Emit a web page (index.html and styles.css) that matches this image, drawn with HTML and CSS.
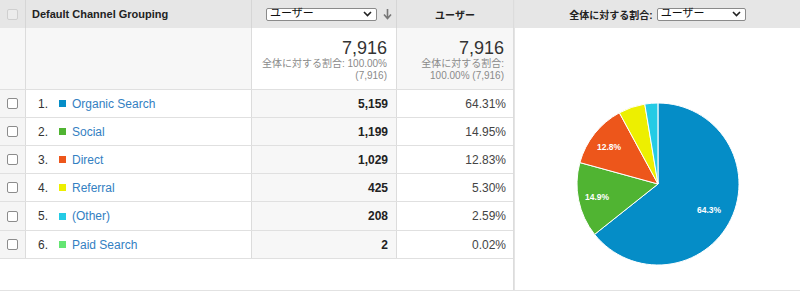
FILE: index.html
```html
<!DOCTYPE html>
<html lang="ja">
<head>
<meta charset="utf-8">
<title>Default Channel Grouping</title>
<link rel="stylesheet" href="styles.css">
</head>
<body>
<div class="report">
  <div class="table">
    <div class="row head">
      <div class="cell c-check"><span class="box disabled"></span></div>
      <div class="cell c-dim"><span class="head-label">Default Channel Grouping</span></div>
      <div class="cell c-metric head-metric">
        <span class="select"><span class="select-text">ユーザー</span><svg class="chev" width="9" height="6" viewBox="0 0 9 6"><path d="M1 1 L4.5 4.5 L8 1" fill="none" stroke="#222" stroke-width="1.6"/></svg></span>
        <svg class="sort" width="9" height="11" viewBox="0 0 9 11"><path d="M4.5 0 V9 M1 5.5 L4.5 9.5 L8 5.5" fill="none" stroke="#777" stroke-width="1.6"/></svg>
      </div>
      <div class="cell c-pct head-pct"><span class="head-label jp">ユーザー</span></div>
    </div>
    <div class="row summary">
      <div class="cell c-check"></div>
      <div class="cell c-dim"></div>
      <div class="cell c-metric sum-cell">
        <span class="big">7,916</span>
        <span class="sub">全体に対する割合: 100.00%</span>
        <span class="sub">(7,916)</span>
      </div>
      <div class="cell c-pct sum-cell">
        <span class="big">7,916</span>
        <span class="sub">全体に対する割合:</span>
        <span class="sub">100.00% (7,916)</span>
      </div>
    </div>
    <div class="row data">
      <div class="cell c-check"><span class="box"></span></div>
      <div class="cell c-dim"><span class="num">1.</span><span class="sw sw-blue"></span><a class="link">Organic Search</a></div>
      <div class="cell c-metric val">5,159</div>
      <div class="cell c-pct pct">64.31%</div>
    </div>
    <div class="row data">
      <div class="cell c-check"><span class="box"></span></div>
      <div class="cell c-dim"><span class="num">2.</span><span class="sw sw-green"></span><a class="link">Social</a></div>
      <div class="cell c-metric val">1,199</div>
      <div class="cell c-pct pct">14.95%</div>
    </div>
    <div class="row data">
      <div class="cell c-check"><span class="box"></span></div>
      <div class="cell c-dim"><span class="num">3.</span><span class="sw sw-orange"></span><a class="link">Direct</a></div>
      <div class="cell c-metric val">1,029</div>
      <div class="cell c-pct pct">12.83%</div>
    </div>
    <div class="row data">
      <div class="cell c-check"><span class="box"></span></div>
      <div class="cell c-dim"><span class="num">4.</span><span class="sw sw-yellow"></span><a class="link">Referral</a></div>
      <div class="cell c-metric val">425</div>
      <div class="cell c-pct pct">5.30%</div>
    </div>
    <div class="row data tall">
      <div class="cell c-check"><span class="box"></span></div>
      <div class="cell c-dim"><span class="num">5.</span><span class="sw sw-cyan"></span><a class="link">(Other)</a></div>
      <div class="cell c-metric val">208</div>
      <div class="cell c-pct pct">2.59%</div>
    </div>
    <div class="row data">
      <div class="cell c-check"><span class="box"></span></div>
      <div class="cell c-dim"><span class="num">6.</span><span class="sw sw-lime"></span><a class="link">Paid Search</a></div>
      <div class="cell c-metric val">2</div>
      <div class="cell c-pct pct">0.02%</div>
    </div>
  </div>
  <div class="chart">
    <div class="chart-head">
      <span class="head-label jp">全体に対する割合:</span>
      <span class="select wide"><span class="select-text">ユーザー</span><svg class="chev" width="9" height="6" viewBox="0 0 9 6"><path d="M1 1 L4.5 4.5 L8 1" fill="none" stroke="#222" stroke-width="1.6"/></svg></span>
    </div>
    <div class="chart-body">
      <svg class="pie" width="164" height="164" viewBox="0 0 164 164">
        <g stroke="#fff" stroke-width="1" stroke-linejoin="round">
          <path fill="#058dc7" d="M82 82 L82 1 A81 81 0 1 1 18.59 132.40 Z"/>
          <path fill="#50b432" d="M82 82 L18.59 132.40 A81 81 0 0 1 3.88 60.58 Z"/>
          <path fill="#ed561b" d="M82 82 L3.88 60.58 A81 81 0 0 1 43.38 10.80 Z"/>
          <path fill="#edef00" d="M82 82 L43.38 10.80 A81 81 0 0 1 68.77 2.08 Z"/>
          <path fill="#24cbe5" d="M82 82 L68.77 2.08 A81 81 0 0 1 81.90 1.00 Z"/>
        </g>
        <g class="pie-label" fill="#fff">
          <text x="133" y="111" text-anchor="middle">64.3%</text>
          <text x="21" y="98" text-anchor="middle">14.9%</text>
          <text x="33" y="48" text-anchor="middle">12.8%</text>
        </g>
      </svg>
    </div>
  </div>
</div>
</body>
</html>
```

FILE: styles.css
```css
html, body {
  margin: 0;
  padding: 0;
  background: #fff;
}

body {
  font-family: "Liberation Sans", Arial, "Noto Sans CJK JP", sans-serif;
  font-size: 12px;
  color: #222;
}

.report {
  display: flex;
  width: 800px;
  height: 290px;
  border-bottom: 1px solid #e2e2e2;
}

.table {
  width: 513px;
  border-right: 1px solid #dcdcdc;
}

.row {
  display: grid;
  grid-template-columns: 25px 226px 145px 117px;
  box-sizing: border-box;
  border-bottom: 1px solid #e0e0e0;
}

.cell {
  display: flex;
  align-items: center;
  box-sizing: border-box;
  min-width: 0;
}

.cell + .cell {
  border-left: 1px solid #dcdcdc;
}

.head {
  height: 28px;
  background: #e6e6e6;
  border-bottom: none;
}

.head .cell + .cell {
  border-left-color: #d6d6d6;
}

.head-label {
  font-weight: bold;
  font-size: 11px;
  color: #222;
}

.head-label.jp {
  font-size: 10px;
}

.jp {
  font-family: "Liberation Sans", "Noto Sans CJK JP", sans-serif;
}

.c-check {
  justify-content: center;
}

.c-dim {
  padding-left: 6px;
}

.head-metric {
  padding-left: 14px;
}

.head-pct {
  justify-content: center;
}

.select {
  display: inline-flex;
  align-items: center;
  justify-content: space-between;
  box-sizing: border-box;
  width: 111px;
  height: 13px;
  padding: 0 4px 0 3px;
  background: #fff;
  border: 1px solid #8a8a8a;
  border-radius: 2px;
  font-family: "Liberation Sans", "Noto Sans CJK JP", sans-serif;
  font-size: 11px;
  line-height: 11px;
  color: #111;
}

.select.wide {
  width: 89px;
  margin-left: 4px;
}

.select-text {
  position: relative;
  top: -1px;
}

.sort {
  margin-left: 6px;
}

.box {
  display: block;
  width: 11px;
  height: 11px;
  box-sizing: border-box;
  border: 1px solid #8c8c8c;
  border-radius: 2px;
  background: #fff;
}

.box.disabled {
  border-color: #cfcfcf;
  background: #ececec;
}

.summary {
  height: 62px;
}

.summary .c-check,
.summary .c-dim,
.summary .c-pct {
  background: #f7f7f7;
}

.summary .c-metric {
  background: #fff;
}

.sum-cell {
  flex-direction: column;
  align-items: flex-end;
  justify-content: flex-start;
  padding-top: 10px;
  padding-right: 9px;
  font-family: "Liberation Sans", "Noto Sans CJK JP", sans-serif;
}

.big {
  font-size: 18px;
  line-height: 20px;
  color: #333;
}

.sub {
  font-size: 10px;
  line-height: 12px;
  color: #8a8a8a;
}

.data {
  height: 28px;
}

.data.tall {
  height: 29px;
}

.data .c-check {
  background: #f5f5f5;
}

.data .c-metric {
  background: #f7f7f7;
}

.num {
  width: 22px;
  padding-left: 6px;
  box-sizing: border-box;
  color: #333;
}

.sw {
  display: inline-block;
  width: 7px;
  height: 7px;
  margin-left: 5px;
  margin-right: 6px;
}

.sw-blue { background: #058dc7; }
.sw-green { background: #50b432; }
.sw-orange { background: #ed561b; }
.sw-yellow { background: #edef00; }
.sw-cyan { background: #24cbe5; }
.sw-lime { background: #64e572; }

.link {
  color: #3380c2;
  text-decoration: none;
}

.val {
  justify-content: flex-end;
  padding-right: 8px;
  font-weight: bold;
  color: #222;
}

.pct {
  justify-content: flex-end;
  padding-right: 7px;
  color: #444;
}

.chart {
  flex: 1;
  border-left: 1px solid #e4e4e4;
}

.chart-head {
  height: 28px;
  background: #e6e6e6;
  display: flex;
  align-items: center;
  justify-content: center;
}

.chart-body {
  display: flex;
  justify-content: center;
  padding-top: 74px;
}

.pie-label {
  font-family: "Liberation Sans", Arial, sans-serif;
  font-size: 8.5px;
  font-weight: bold;
}
```
